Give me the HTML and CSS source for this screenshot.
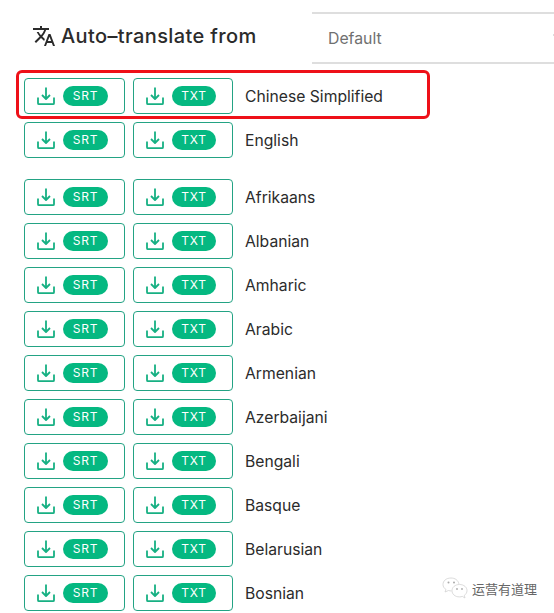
FILE: index.html
```html
<!DOCTYPE html>
<html lang="en">
<head>
    <meta charset="UTF-8">
    <meta name="viewport" content="width=device-width, initial-scale=1.0">
    <title>Auto-translate subtitles</title>
    <link rel="stylesheet" href="styles.css">
</head>
<body>
    <svg class="sprite" xmlns="http://www.w3.org/2000/svg">
        <symbol id="download" viewBox="0 0 18 19">
            <path d="M1 10.500v5.700q0 1 1 1h14q1 0 1-1v-5.700M9 .5v11.500M5 8l4 4 4-4" fill="none" stroke="currentColor" stroke-width="1.8" stroke-linejoin="round"/>
        </symbol>
    </svg>

    <div class="header">
        <h1 class="title">
            <svg class="translate-icon" viewBox="1 2 22 20">
                <path fill="currentColor" d="M12.87 15.07l-2.54-2.51.03-.03c1.74-1.94 2.98-4.17 3.71-6.53H17V4h-7V2H8v2H1v1.99h11.17C11.5 7.92 10.44 9.75 9 11.35 8.07 10.32 7.3 9.19 6.69 8h-2c.73 1.63 1.73 3.17 2.98 4.56l-5.09 5.02L4 19l5-5 3.11 3.11.76-2.04zM18.5 10h-2L12 22h2l1.12-3h4.75L21 22h2l-4.5-12zm-2.62 7l1.62-4.33L19.12 17h-3.24z"/>
            </svg>
            Auto–translate from
        </h1>
        <div class="select">Default<span class="arrow"></span></div>
    </div>

    <div class="languages" id="top-languages"></div>
    <div class="languages" id="all-languages"></div>

    <div class="highlight"></div>

    <div class="watermark">
        <svg class="wechat" viewBox="0 0 26 22">
            <path d="M17 7C16 3 13 1 9 1 4 1 1 4 1 7.5c0 2 1 3.800 3 5L3 15l3.500-1.500c1 .3 2 .5 3 .4"/>
            <path d="M17.500 7.500c-4.500 0-7.500 2.800-7.500 6.200s3 6.200 7.500 6.200c1 0 2-.2 2.800-.5L23 21l-.7-2.600c1.700-1.200 2.700-2.800 2.700-4.700 0-3.400-3-6.200-7.500-6.200z"/>
            <g class="eyes">
                <circle cx="6.500" cy="5.500" r="1"/>
                <circle cx="12" cy="5.500" r="1"/>
                <circle cx="15" cy="12" r=".9"/>
                <circle cx="20" cy="12" r=".9"/>
            </g>
        </svg>
        <span>运营有道理</span>
    </div>

    <script>
        const topLanguages = ['Chinese Simplified', 'English'];
        const allLanguages = [
            'Afrikaans', 'Albanian', 'Amharic', 'Arabic', 'Armenian',
            'Azerbaijani', 'Bengali', 'Basque', 'Belarusian', 'Bosnian'
        ];

        function button(format) {
            return `<button class="button ${format.toLowerCase()}">
                <svg class="download-icon"><use href="#download"/></svg>
                <span class="badge">${format}</span>
            </button>`;
        }

        function renderLanguages(id, languages) {
            document.getElementById(id).innerHTML = languages.map(name =>
                `<div class="row">${button('SRT')}${button('TXT')}<span class="name">${name}</span></div>`
            ).join('');
        }

        renderLanguages('top-languages', topLanguages);
        renderLanguages('all-languages', allLanguages);
    </script>
</body>
</html>
```
FILE: styles.css
```css
* {
    box-sizing: border-box;
}

body {
    position: relative;
    font-family: Inter, "Noto Sans CJK SC", sans-serif;
    background-color: #ffffff;
    color: #2b2b2b;
    margin: 0;
    height: 613px;
    overflow: hidden;
}

.sprite {
    display: none;
}

.header {
    display: flex;
    padding-top: 12px;
    height: 78px;
}

.title {
    display: flex;
    align-items: center;
    width: 312px;
    height: 48px;
    margin: 0;
    padding-left: 33px;
    font-size: 20px;
    font-weight: 500;
    letter-spacing: 0.38px;
    white-space: nowrap;
}

.translate-icon {
    width: 22px;
    height: 20px;
    margin-right: 6px;
}

.select {
    position: relative;
    flex: 1;
    height: 52px;
    padding-left: 16px;
    border-top: 2px solid #dedede;
    border-bottom: 2px solid #dedede;
    color: #707070;
    font-size: 15.8px;
    line-height: 49px;
}

.arrow {
    position: absolute;
    right: 0;
    top: 20px;
    width: 1px;
    height: 2px;
    background-color: #dddddd;
}

.languages {
    display: flex;
    flex-direction: column;
    gap: 8px;
    padding-left: 24px;
    margin-bottom: 21px;
}

.row {
    display: flex;
    align-items: center;
    height: 36px;
}

.button {
    display: flex;
    align-items: center;
    width: 101px;
    height: 36px;
    margin-right: 8px;
    padding: 0 0 0 12px;
    background-color: #ffffff;
    color: #17b083;
    border: 1px solid #23a384;
    border-radius: 4px;
    font-family: inherit;
}

.button.txt {
    width: 100px;
    margin-right: 12px;
}

.download-icon {
    width: 18px;
    height: 19px;
    margin-right: 8px;
}

.badge {
    width: 45px;
    height: 20px;
    border-radius: 10px;
    background-color: #05b881;
    color: #ffffff;
    font-size: 12px;
    letter-spacing: 0.8px;
    line-height: 20px;
    text-align: center;
}

.txt .badge {
    width: 44px;
}

.name {
    padding-top: 2px;
    font-size: 15.7px;
    line-height: 24px;
}

/* red frame around the first row */
.highlight {
    position: absolute;
    left: 16px;
    top: 70px;
    width: 414px;
    height: 49px;
    border: 3px solid #ee1018;
    border-radius: 6px;
}

.watermark {
    position: absolute;
    left: 442px;
    top: 576px;
    display: flex;
    align-items: center;
    gap: 4px;
    height: 24px;
    color: #666666;
    font-size: 13px;
}

.wechat {
    width: 26px;
    height: 22px;
    fill: #ffffff;
    stroke: #d2d2d2;
    stroke-width: 0.8;
}

.eyes {
    fill: #aaaaaa;
    stroke: none;
}
```
